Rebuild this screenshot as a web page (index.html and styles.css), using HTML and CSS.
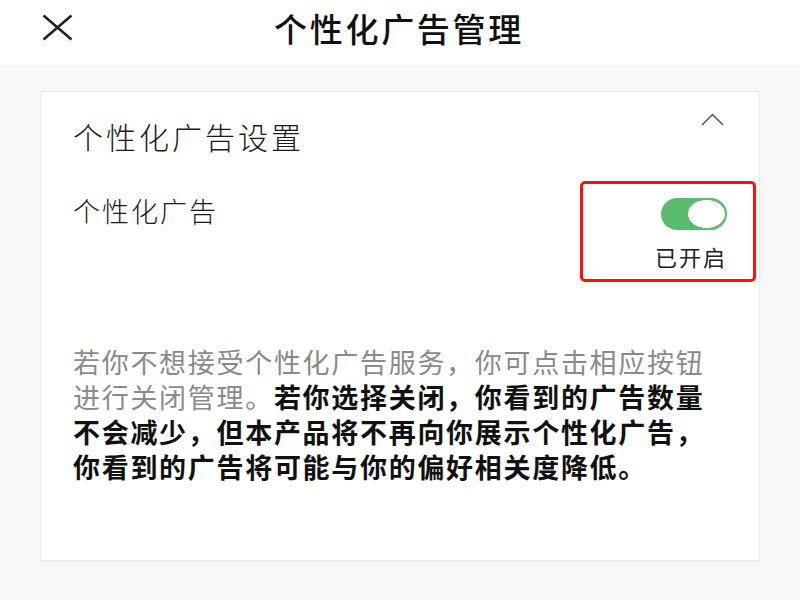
FILE: index.html
```html
<!DOCTYPE html>
<html lang="zh-CN">
<head>
<meta charset="utf-8">
<link rel="stylesheet" href="styles.css">
</head>
<body>
<header class="topbar">
  <div class="close">
    <svg width="31" height="27" viewBox="0 0 31 27"><path d="M1.5 1.5 L29.5 25.5 M29.5 1.5 L1.5 25.5" stroke="#222" stroke-width="2.6" fill="none"/></svg>
  </div>
  <h1 class="title">个性化广告管理</h1>
  <div></div>
</header>
<main class="page">
  <section class="card">
    <div class="card-head">
      <h2 class="heading">个性化广告设置</h2>
      <svg class="chevron" width="23" height="13" viewBox="0 0 23 13"><polyline points="1,12 11.5,1.5 22,12" stroke="#555" stroke-width="1.5" fill="none"/></svg>
    </div>
    <div class="setting-row">
      <div class="label">个性化广告</div>
      <div class="switch-col">
        <div class="switch"><span class="knob"></span></div>
        <div class="state">已开启</div>
        <span class="highlight"></span>
      </div>
    </div>
    <p class="desc"><span class="muted">若你不想接受个性化广告服务，你可点击相应按钮进行关闭管理。</span><strong>若你选择关闭，你看到的广告数量不会减少，但本产品将不再向你展示个性化广告，你看到的广告将可能与你的偏好相关度降低。</strong></p>
  </section>
</main>
</body>
</html>
```
FILE: styles.css
```css
* { box-sizing: border-box; }
html, body { margin: 0; padding: 0; }
body {
  width: 800px;
  height: 600px;
  overflow: hidden;
  background: #f8f8f8;
  font-family: "Noto Sans CJK SC", "Noto Sans", sans-serif;
  color: #111;
}
.topbar {
  height: 65px;
  background: #fff;
  display: grid;
  grid-template-columns: 1fr auto 1fr;
  align-items: start;
  padding-top: 8px;
}
.close {
  padding-left: 42px;
  padding-top: 6px;
  height: 40px;
}
.close svg { display: block; }
.title {
  margin: 0;
  font-size: 33px;
  line-height: 40px;
  font-weight: 500;
  letter-spacing: 2.7px;
  color: #111;
  transform: translateX(-1px);
}
.page {
  padding: 26px 40px 0;
}
.card {
  background: #fff;
  border: 1px solid #ebebeb;
  box-shadow: 0 1px 2px rgba(0,0,0,0.04);
  height: 470px;
  padding: 24px 32px 0 32px;
}
.card-head {
  display: flex;
  justify-content: space-between;
  align-items: flex-start;
}
.heading {
  margin: 0;
  font-size: 30px;
  line-height: 40px;
  font-weight: 300;
  letter-spacing: 3px;
  color: #1a1a1a;
}
.chevron {
  display: block;
  margin-top: -3px;
  margin-right: 3px;
}
.setting-row {
  margin-top: 37px;
  display: flex;
  justify-content: space-between;
  align-items: flex-start;
}
.label {
  font-size: 27px;
  line-height: 36px;
  font-weight: 300;
  letter-spacing: 2px;
  color: #1a1a1a;
}
.switch-col {
  position: relative;
  display: flex;
  flex-direction: column;
  align-items: flex-end;
  padding-top: 5px;
}
.switch {
  width: 66px;
  height: 32px;
  border-radius: 16px;
  background: #5bbb6e;
  display: flex;
  justify-content: flex-end;
  align-items: center;
  padding-right: 1px;
}
.knob {
  width: 39px;
  height: 30px;
  border-radius: 50%;
  background: #fff;
  border: 1px solid #5bbb6e;
}
.state {
  margin-top: 12px;
  font-size: 22px;
  line-height: 28px;
  letter-spacing: 2px;
  color: #222;
  margin-right: 0;
}
.highlight {
  position: absolute;
  left: -75px;
  right: -29px;
  top: -12px;
  bottom: -12px;
  border: 3px solid #ff1010;
  border-radius: 5px;
  pointer-events: none;
}
.desc {
  margin: 74px 0 0;
  width: 645px;
  font-size: 27px;
  line-height: 35px;
  letter-spacing: 1.7px;
}
.muted {
  color: #8a8a8a;
  font-weight: 400;
}
.desc strong {
  font-weight: 700;
  color: #111;
}
```
